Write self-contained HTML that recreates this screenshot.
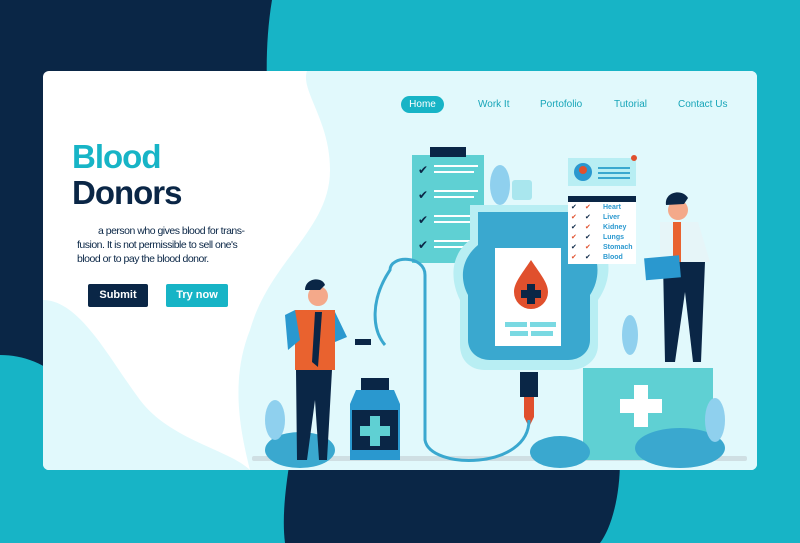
<!DOCTYPE html>
<html><head><meta charset="utf-8"><style>
html,body{margin:0;padding:0}
body{width:800px;height:543px;overflow:hidden;position:relative;background:#17b4c6;font-family:"Liberation Sans",sans-serif}
svg{position:absolute;left:0;top:0}
.t{position:absolute;font-family:"Liberation Sans",sans-serif}
</style></head><body>
<svg width="800" height="543" viewBox="0 0 800 543">
<path d="M0 0H272C262 60 268 120 275 200V400H0Z" fill="#0a2646"/>
<path d="M0 355C40 355 80 380 90 440V543H0Z" fill="#17b4c6"/>
<path d="M290 460H620C620 500 610 530 600 543H285C282 520 285 490 290 460Z" fill="#0a2646"/>
<rect x="43" y="71" width="714" height="399" rx="6" fill="#fff"/>
<path d="M307 71H751a6 6 0 0 1 6 6V464a6 6 0 0 1-6 6H250C240 430 230 380 250 330C270 260 330 230 330 170C330 120 300 90 307 71Z" fill="#e1f9fc"/>
<path d="M43 300C80 300 110 360 140 400C170 440 230 450 250 470H49a6 6 0 0 1-6-6Z" fill="#e1f9fc"/>
<rect x="252" y="456" width="495" height="5" rx="2" fill="#cfdfe3"/>
<rect x="412" y="155" width="72" height="108" fill="#5fd0d3"/>
<rect x="430" y="147" width="36" height="10" fill="#0a2646"/>
<g fill="#0a2646"><text x="418" y="174" font-size="12">✔</text><text x="418" y="199" font-size="12">✔</text><text x="418" y="224" font-size="12">✔</text><text x="418" y="249" font-size="12">✔</text></g>
<g stroke="#fff" stroke-width="2"><path d="M434 166h44M434 172h40M434 191h44M434 197h40M434 216h44M434 222h40M434 241h44M434 247h40"/></g>
<rect x="512" y="180" width="20" height="20" rx="3" fill="#a9e6ee"/>
<path d="M470 205H598V240C612 255 612 280 598 300V345C598 360 585 370 570 370H485C470 370 460 360 460 345V300C450 280 450 255 470 240Z" fill="#b8eef3"/>
<path d="M478 212H590V245C600 260 600 280 590 295V340C590 352 580 360 568 360H490C478 360 468 352 468 340V295C460 280 460 260 478 245Z" fill="#3aa8cf"/>
<rect x="495" y="248" width="66" height="98" fill="#fff"/>
<path d="M531 260C521 275 514 283 514 292a17 17 0 0 0 34 0C548 283 541 275 531 260Z" fill="#e0502d"/>
<path d="M527 284h8v6h6v8h-6v6h-8v-6h-6v-8h6z" fill="#0a2646"/>
<g fill="#7ad9e2"><rect x="505" y="322" width="22" height="5"/><rect x="530" y="322" width="26" height="5"/><rect x="510" y="331" width="18" height="5"/><rect x="531" y="331" width="22" height="5"/></g>
<rect x="520" y="372" width="18" height="25" fill="#0a2646"/>
<path d="M524 397h10v20l-5 10-5-10z" fill="#e0502d"/>
<path d="M529 420C529 470 430 470 425 440V275C425 255 390 255 390 270C370 300 372 330 385 345" fill="none" stroke="#3aa8cf" stroke-width="3"/>
<rect x="568" y="158" width="68" height="28" fill="#b8eef3"/>
<circle cx="583" cy="172" r="9" fill="#2a98cf"/><circle cx="583" cy="170" r="4" fill="#e0502d"/>
<path d="M598 168h32M598 173h32M598 178h32" stroke="#3aa8cf" stroke-width="2"/>
<circle cx="634" cy="158" r="3" fill="#e0502d"/>
<rect x="568" y="196" width="68" height="6" fill="#0a2646"/>
<rect x="568" y="202" width="68" height="62" fill="#fff"/>
<g font-size="7" fill="#2a98cf" font-weight="bold"><text x="603" y="209">Heart</text><text x="603" y="219">Liver</text><text x="603" y="229">Kidney</text><text x="603" y="239">Lungs</text><text x="603" y="249">Stomach</text><text x="603" y="259">Blood</text></g>
<g font-size="7"><text x="571" y="209" fill="#0a2646">✔</text><text x="585" y="209" fill="#e0502d">✔</text><text x="571" y="219" fill="#e0502d">✔</text><text x="585" y="219" fill="#0a2646">✔</text><text x="571" y="229" fill="#0a2646">✔</text><text x="585" y="229" fill="#e0502d">✔</text><text x="571" y="239" fill="#e0502d">✔</text><text x="585" y="239" fill="#0a2646">✔</text><text x="571" y="249" fill="#0a2646">✔</text><text x="585" y="249" fill="#e0502d">✔</text><text x="571" y="259" fill="#e0502d">✔</text><text x="585" y="259" fill="#0a2646">✔</text></g>
<rect x="583" y="368" width="130" height="92" fill="#5fd0d3"/>
<path d="M634 385h14v14h14v14h-14v14h-14v-14h-14v-14h14z" fill="#fff"/>
<rect x="361" y="378" width="28" height="12" fill="#0a2646"/>
<path d="M356 390h38l6 14v56h-50v-56z" fill="#2a98cf"/>
<rect x="352" y="410" width="46" height="40" fill="#0a2646"/>
<path d="M370 416h10v10h10v10h-10v10h-10v-10h-10v-10h10z" fill="#5fd0d3"/>
<g fill="#3aa8cf"><ellipse cx="300" cy="450" rx="35" ry="18"/><ellipse cx="560" cy="452" rx="30" ry="16"/><ellipse cx="680" cy="448" rx="45" ry="20"/></g>
<g fill="#8fd0ee"><ellipse cx="275" cy="420" rx="10" ry="20"/><ellipse cx="715" cy="420" rx="10" ry="22"/><ellipse cx="500" cy="185" rx="10" ry="20"/><ellipse cx="630" cy="335" rx="8" ry="20"/></g>
<circle cx="318" cy="296" r="10" fill="#f4a98a"/><path d="M305 290C305 278 322 276 325 285L320 290Z" fill="#0a2646"/>
<path d="M295 310h40v60h-40z" fill="#e9622f"/>
<path d="M285 315l10-5 5 30-12 10z" fill="#2a98cf"/><path d="M335 312l12 25-12 5z" fill="#2a98cf"/>
<path d="M315 312l-3 50 6 5 4-55z" fill="#0a2646"/>
<path d="M296 370h36l-5 90h-8l-4-60-8 60h-10z" fill="#0a2646"/>
<rect x="355" y="339" width="16" height="6" fill="#0a2646"/>
<circle cx="678" cy="210" r="10" fill="#f4a98a"/><path d="M666 205C664 192 682 188 688 198L684 204Z" fill="#0a2646"/>
<path d="M660 222h38l12 40h-50z" fill="#e6f5f8"/>
<rect x="673" y="222" width="8" height="40" fill="#e9622f"/>
<path d="M663 262h42l-4 100h-8l-8-70-10 70h-10z" fill="#0a2646"/>
<rect x="645" y="257" width="35" height="22" fill="#2a98cf" transform="rotate(-5 660 268)"/>
</svg>
<div class="t" style="left:401px;top:96px;width:43px;height:17px;border-radius:9px;background:#17b4c6;color:#fff;font-size:10px;line-height:17px;text-align:center">Home</div>
<div class="t" style="left:478px;top:99px;color:#17a5b8;font-size:10px">Work It</div>
<div class="t" style="left:540px;top:99px;color:#17a5b8;font-size:10px">Portofolio</div>
<div class="t" style="left:614px;top:99px;color:#17a5b8;font-size:10px">Tutorial</div>
<div class="t" style="left:678px;top:99px;color:#17a5b8;font-size:10px">Contact Us</div>
<div class="t" style="left:72px;top:138px;color:#17b4c6;font-size:33px;font-weight:bold;letter-spacing:-1px">Blood</div>
<div class="t" style="left:72px;top:174px;color:#0a2646;font-size:33px;font-weight:bold;letter-spacing:-1px">Donors</div>
<div class="t" style="left:77px;top:224px;color:#0a2646;font-size:10.5px;line-height:14px;white-space:nowrap;letter-spacing:-0.5px"><span style="padding-left:21px">a person who gives blood for trans-</span><br>fusion. It is not permissible to sell one's<br>blood or to pay the blood donor.</div>
<div class="t" style="left:88px;top:284px;width:60px;height:23px;background:#0a2646;color:#fff;font-size:11px;font-weight:bold;line-height:23px;text-align:center;border-radius:2px">Submit</div>
<div class="t" style="left:166px;top:284px;width:62px;height:23px;background:#17b4c6;color:#fff;font-size:11px;font-weight:bold;line-height:23px;text-align:center;border-radius:2px">Try now</div>
</body></html>
